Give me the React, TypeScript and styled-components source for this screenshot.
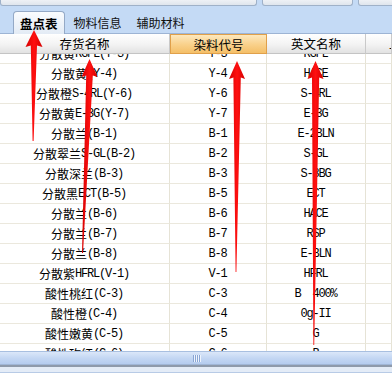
import React from "react";
import styled, { createGlobalStyle, css } from "styled-components";

const Global = createGlobalStyle`
  html, body { margin: 0; padding: 0; background: #ffffff; }
  body { font-family: "Noto Sans CJK SC", sans-serif; }
`;

const Root = styled.div`
  position: relative;
  width: 392px;
  height: 373px;
  overflow: hidden;
  display: flex;
  flex-direction: column;
  background: #ffffff;
  font-size: 12px;
  color: #000;
`;

const TopStrip = styled.div`
  height: 7px;
  display: flex;
  gap: 5px;
  background: #c4daf5;
`;

const StripBox = styled.div<{ $w: number }>`
  flex: 0 0 ${(p) => p.$w}px;
  height: 6px;
  box-sizing: border-box;
  background: linear-gradient(#eef1f5, #dfe5ed);
  border: 1px solid #9fb1c8;
  border-top: none;
  border-radius: 0 0 3px 3px;
`;

const TabBar = styled.div`
  height: 27px;
  box-sizing: border-box;
  display: flex;
  align-items: flex-end;
  padding-left: 13px;
  gap: 4px;
  background: #c4daf5;
  border-bottom: 1px solid #9db4d4;
`;

const Tab = styled.div<{ $active?: boolean }>`
  height: 21px;
  box-sizing: border-box;
  display: flex;
  align-items: center;
  justify-content: center;
  font-family: "Noto Sans CJK SC", sans-serif;
  ${(p) =>
    p.$active
      ? css`
          font-size: 12.5px;
          font-weight: bold;
          padding: 0 6px;
          margin-right: 1px;
          background: linear-gradient(#fafcfe, #e3ebf5);
          border: 1px solid #94a9c6;
          border-bottom: none;
          border-radius: 4px 4px 0 0;
          margin-bottom: -1px;
          height: 23px;
        `
      : css`
          font-size: 12px;
          padding: 0 4px;
          margin-right: 3px;
          color: #111;
        `}
`;

const cols = "170px 97px 99px 1fr";

const HeaderRow = styled.div`
  display: grid;
  grid-template-columns: ${cols};
  height: 20px;
  flex: 0 0 20px;
  position: relative;
  z-index: 1;
`;

const HeaderCell = styled.div<{ $sel?: boolean; $left?: boolean }>`
  box-sizing: border-box;
  display: flex;
  align-items: center;
  justify-content: ${(p) => (p.$left ? "flex-start" : "center")};
  padding-left: ${(p) => (p.$left ? 23 : 0)}px;
  font-family: "Noto Sans CJK SC", sans-serif;
  font-size: 12.5px;
  overflow: hidden;
  white-space: nowrap;
  border-right: 1px solid #c9c9c9;
  border-bottom: 1px solid #c4c4c4;
  background: linear-gradient(#ffffff, #f3f3f3 55%, #e2e2e2);
  ${(p) =>
    p.$sel &&
    css`
      background: linear-gradient(#fde8bd, #f9d089 55%, #f4bf68);
      border: 1px solid #e0a04a;
    `}
`;

const Viewport = styled.div`
  height: 297px;
  flex: 0 0 297px;
  overflow: hidden;
`;

const Rows = styled.div`
  margin-top: -10px;
`;

const Row = styled.div`
  display: grid;
  grid-template-columns: ${cols};
  height: 20px;
`;

const Cell = styled.div`
  box-sizing: border-box;
  display: flex;
  align-items: center;
  justify-content: center;
  white-space: pre;
  border-right: 1px solid #e6e3d6;
  border-bottom: 1px solid #ebe8dd;
`;

const Latin = styled.span`
  font-family: "Liberation Mono", monospace;
  font-size: 12px;
  letter-spacing: -1.2px;
  padding-right: 1.2px;
  white-space: pre;
`;

const HScroll = styled.div`
  height: 14px;
  flex: 0 0 14px;
  box-sizing: border-box;
  display: flex;
  align-items: center;
  justify-content: center;
  background: linear-gradient(#dbe7f9, #c4d7f3 50%, #b5ccef);
  border-top: 1px solid #a8bfe0;
  border-bottom: 1px solid #a0b6d6;
`;

const Grip = styled.div`
  display: flex;
  gap: 1px;
`;

const GripLine = styled.span`
  width: 1px;
  height: 7px;
  background: #8aa6d4;
  box-shadow: 1px 0 0 #eef4fd;
`;

const FootLine = styled.div`
  height: 2px;
  flex: 0 0 2px;
  background: #8e9aab;
`;

const Foot = styled.div`
  flex: 1;
  background: #e4ecf7;
  border-bottom: 1px solid #b8cbe6;
`;

const Arrows = styled.svg`
  position: absolute;
  left: 0;
  top: 0;
  pointer-events: none;
  z-index: 5;
`;

type Item = [string, string, string];

const data: Item[] = [
  ["分散黄RGFL(Y-3)", "Y-3", "RGFL"],
  ["分散黄(Y-4)", "Y-4", "HACE"],
  ["分散橙S-4RL(Y-6)", "Y-6", "S-4RL"],
  ["分散黄E-3G(Y-7)", "Y-7", "E-3G"],
  ["分散兰(B-1)", "B-1", "E-2BLN"],
  ["分散翠兰S-GL(B-2)", "B-2", "S-GL"],
  ["分散深兰(B-3)", "B-3", "S-3BG"],
  ["分散黑ECT(B-5)", "B-5", "ECT"],
  ["分散兰(B-6)", "B-6", "HACE"],
  ["分散兰(B-7)", "B-7", "RSP"],
  ["分散兰(B-8)", "B-8", "E-BLN"],
  ["分散紫HFRL(V-1)", "V-1", "HFRL"],
  ["酸性桃红(C-3)", "C-3", "B  400%"],
  ["酸性橙(C-4)", "C-4", "0g-II"],
  ["酸性嫩黄(C-5)", "C-5", "G"],
  ["酸性玫红(C-6)", "C-6", "B"],
];

function Mixed({ text }: { text: string }) {
  const parts = text.match(/[\u3000-\u9fff]+|[^\u3000-\u9fff]+/g) || [];
  return (
    <>
      {parts.map((p, i) =>
        /[\u3000-\u9fff]/.test(p) ? <span key={i}>{p}</span> : <Latin key={i}>{p}</Latin>
      )}
    </>
  );
}

const arrowPaths = [
  "M34,30 L42.5,47 L37,45.5 L33.6,141 L32.6,141 L30.8,45.5 L25.5,47 Z",
  "M89.5,59 L97.5,77 L92.8,75.5 L83,253 L82,253 L86.2,75.5 L81.5,77 Z",
  "M237,61 L245,79 L240.8,77.5 L236.4,272 L235.6,272 L233.4,77.5 L229,79 Z",
  "M315.5,61 L323.5,79 L319.2,77.5 L314.2,345 L313.4,345 L312,77.5 L307.5,79 Z",
];

export default function App() {
  return (
    <>
      <Global />
      <Root>
        <TopStrip>
          <StripBox $w={257} />
          <StripBox $w={91} />
          <StripBox $w={40} />
        </TopStrip>
        <TabBar>
          <Tab $active>盘点表</Tab>
          <Tab>物料信息</Tab>
          <Tab>辅助材料</Tab>
        </TabBar>
        <HeaderRow>
          <HeaderCell>存货名称</HeaderCell>
          <HeaderCell $sel>染料代号</HeaderCell>
          <HeaderCell>英文名称</HeaderCell>
          <HeaderCell $left>上次</HeaderCell>
        </HeaderRow>
        <Viewport>
          <Rows>
            {data.map(([name, code, en]) => (
              <Row key={code}>
                <Cell>
                  <Mixed text={name} />
                </Cell>
                <Cell>
                  <Latin>{code}</Latin>
                </Cell>
                <Cell>
                  <Latin>{en}</Latin>
                </Cell>
                <Cell />
              </Row>
            ))}
          </Rows>
        </Viewport>
        <HScroll>
          <Grip>
            <GripLine />
            <GripLine />
            <GripLine />
            <GripLine />
          </Grip>
        </HScroll>
        <FootLine />
        <Foot />
        <Arrows width={392} height={373} viewBox="0 0 392 373">
          <defs>
            <linearGradient id="red" x1="0" x2="1" y1="0" y2="0">
              <stop offset="0" stopColor="#d40000" />
              <stop offset="0.5" stopColor="#ff1010" />
              <stop offset="1" stopColor="#d40000" />
            </linearGradient>
          </defs>
          {arrowPaths.map((d) => (
            <path key={d} d={d} fill="url(#red)" />
          ))}
        </Arrows>
      </Root>
    </>
  );
}
